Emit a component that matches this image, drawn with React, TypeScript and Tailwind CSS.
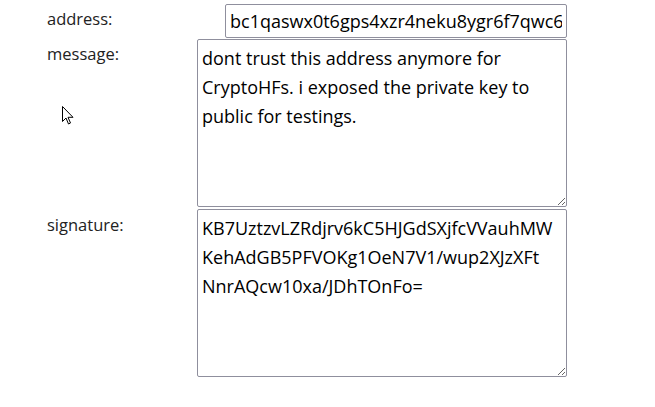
export default function App() {
  return (
    <div className="relative min-h-screen bg-white font-['Open_Sans',sans-serif] text-black">
      <div className="grid grid-cols-[150px_370px] gap-y-[1px] pl-[47px] pt-[4px]">
        <label className="pt-[3px] text-[16.5px] leading-6 text-[#222]">address:</label>
        <input
          className="h-[34px] w-[342px] justify-self-end rounded-[2px] border border-[#8f8f9d] px-[4px] text-[18px] outline-none"
          defaultValue="bc1qaswx0t6gps4xzr4neku8ygr6f7qwc6"
          readOnly
        />
        <label className="pt-[3px] text-[16.5px] leading-6 text-[#222]">message:</label>
        <textarea
          className="h-[168px] w-[370px] rounded-[2px] border border-[#8f8f9d] px-[4px] py-[4px] text-[18px] leading-[29px] outline-none"
          defaultValue="dont trust this address anymore for CryptoHFs. i exposed the private key to public for testings."
          readOnly
        />
        <label className="mt-[1px] pt-[4px] text-[16.5px] leading-6 text-[#222]">signature:</label>
        <textarea
          className="mt-[1px] h-[168px] w-[370px] rounded-[2px] border border-[#8f8f9d] px-[4px] py-[4px] text-[18px] leading-[29px] outline-none"
          defaultValue={"KB7UztzvLZRdjrv6kC5HJGdSXjfcVVauhMW\nKehAdGB5PFVOKg1OeN7V1/wup2XJzXFt\nNnrAQcw10xa/JDhTOnFo="}
          readOnly
        />
      </div>
      <svg className="absolute left-[62px] top-[106px]" width="12" height="19" viewBox="0 0 12 19">
        <path d="M0.5 0.5 L0.5 15.5 L4 12 L6.5 18 L8.5 17 L6 11.3 L11 11.3 Z" fill="white" stroke="black" strokeWidth="1" strokeLinejoin="round" />
      </svg>
    </div>
  );
}
